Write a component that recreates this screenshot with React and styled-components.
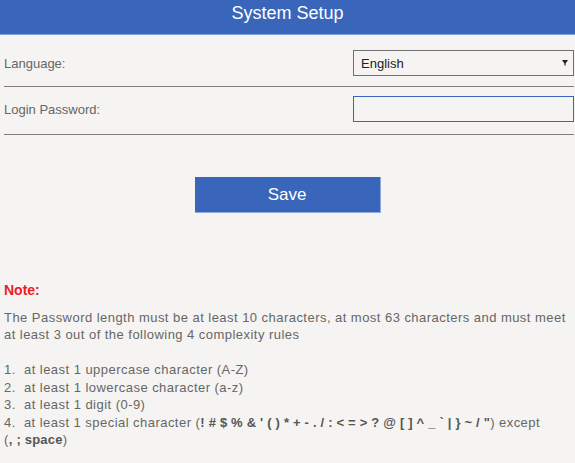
import React from 'react';
import styled, { createGlobalStyle } from 'styled-components';

const Global = createGlobalStyle`
  html, body {
    margin: 0;
    padding: 0;
    background: #f5f4f2;
    font-family: "Liberation Sans", Arial, sans-serif;
  }
`;

const Header = styled.div`
  height: 34px;
  background: #3966bb;
  border-bottom: 1px solid #7f9fd9;
  color: #ffffff;
  font-size: 18px;
  line-height: 27px;
  text-align: center;
`;

const Form = styled.div`
  padding: 0 1px 0 4px;
`;

const Row = styled.div`
  display: flex;
  align-items: center;
  justify-content: space-between;
  padding: ${(p) => p.$top}px 0 ${(p) => p.$bottom}px;
  border-bottom: 1px solid #7d7d7d;
`;

const Label = styled.div`
  font-size: 13px;
  color: #666666;
`;

const SelectWrap = styled.div`
  position: relative;
  width: 221px;
  height: 26px;
`;

const Select = styled.select`
  appearance: none;
  width: 100%;
  height: 100%;
  box-sizing: border-box;
  border: 1px solid #707070;
  border-radius: 0;
  background: #f5f4f2;
  padding: 0 0 0 7px;
  font-family: "Liberation Sans", Arial, sans-serif;
  font-size: 13px;
  color: #222222;
  outline: none;
`;

const Arrow = styled.svg`
  position: absolute;
  right: 6px;
  top: 10px;
  pointer-events: none;
`;

const Input = styled.input`
  width: 221px;
  height: 26px;
  box-sizing: border-box;
  border: 1px solid #3966bb;
  border-radius: 0;
  background: #f5f4f2;
  padding: 0 6px;
  outline: none;
`;

const Actions = styled.div`
  display: flex;
  justify-content: center;
  padding-top: 42px;
`;

const SaveButton = styled.button`
  width: 186px;
  height: 36px;
  background: #3966bb;
  border: none;
  border-right: 1px solid #8fa9dd;
  border-bottom: 1px solid #8fa9dd;
  color: #ffffff;
  font-family: "Liberation Sans", Arial, sans-serif;
  font-size: 17px;
  cursor: pointer;
`;

const Notes = styled.div`
  padding: 69px 4px 0;
  font-size: 13px;
  line-height: 17.5px;
  letter-spacing: 0.46px;
  color: #666666;
`;

const NoteTitle = styled.div`
  color: #ee1c25;
  font-weight: bold;
  font-size: 14px;
  letter-spacing: 0;
  margin-bottom: 9px;
`;

const Para = styled.p`
  margin: 0 0 17.5px;
`;

const Rule = styled.div`
  display: flex;
`;

const Num = styled.span`
  flex: 0 0 20px;
`;

const B = styled.b`
  color: #555555;
  letter-spacing: 0.2px;
`;

const NoWrap = styled.span`
  white-space: nowrap;
`;

const rules = [
  'at least 1 uppercase character (A-Z)',
  'at least 1 lowercase character (a-z)',
  'at least 1 digit (0-9)',
];

export default function App() {
  return (
    <>
      <Global />
      <Header>System Setup</Header>
      <Form>
        <Row $top={15} $bottom={10}>
          <Label>Language:</Label>
          <SelectWrap>
            <Select defaultValue="en">
              <option value="en">English</option>
            </Select>
            <Arrow width="6" height="6" viewBox="0 0 6 6">
              <path d="M0 0H6L3.6 3.6V5.5H2.4V3.6Z" fill="#222222" />
            </Arrow>
          </SelectWrap>
        </Row>
        <Row $top={9} $bottom={12}>
          <Label>Login Password:</Label>
          <Input type="password" />
        </Row>
      </Form>
      <Actions>
        <SaveButton>Save</SaveButton>
      </Actions>
      <Notes>
        <NoteTitle>Note:</NoteTitle>
        <Para>
          The Password length must be at least 10 characters, at most 63 characters and must meet at least 3 out of the following 4 complexity rules
        </Para>
        {rules.map((r, i) => (
          <Rule key={i}>
            <Num>{i + 1}.</Num>
            <span>{r}</span>
          </Rule>
        ))}
        <div>
          4.&nbsp; at least 1 special character (<B>! # $ % &amp; ' ( ) * + - . / : &lt; = &gt; ? @ [ ] ^ _ ` | } ~ / "</B>) except{' '}
          <NoWrap>(<B>, ; space</B>)</NoWrap>
        </div>
      </Notes>
    </>
  );
}
